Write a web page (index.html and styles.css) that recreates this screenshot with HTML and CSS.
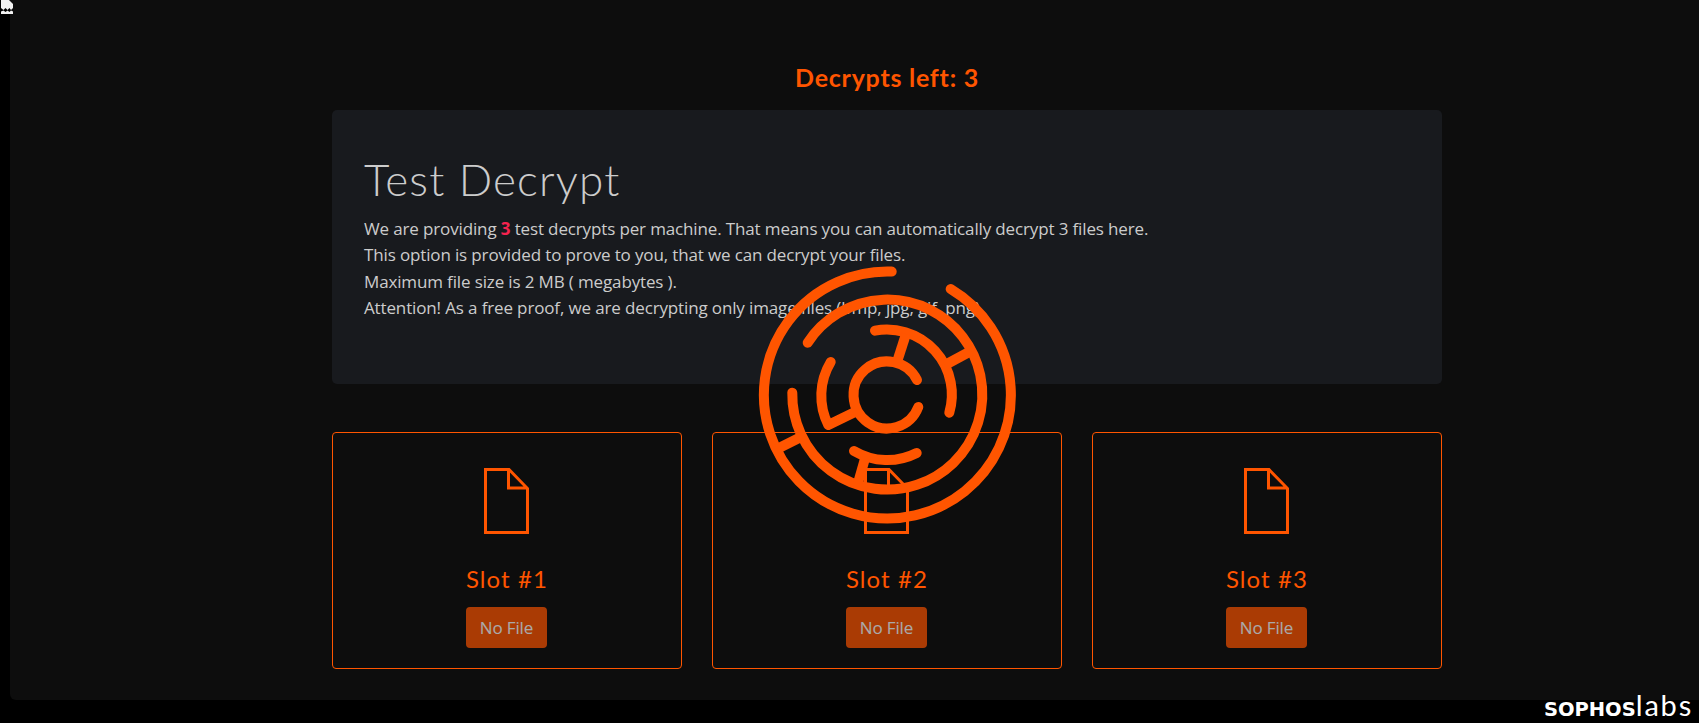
FILE: index.html
```html
<!DOCTYPE html>
<html lang="en">
<head>
<meta charset="utf-8">
<title>Test Decrypt</title>
<link rel="stylesheet" href="styles.css">
</head>
<body>
<svg class="broken-icon" viewBox="0 0 13 14" aria-hidden="true"><path class="broken-fill" d="M1 0H9L13 4V8L11 10L9.5 8L7.5 10L5.5 8L3.5 10L1 8ZM1 14V11.5L3.5 10.5L5.5 12L7.5 10.5L9.5 12L11 10.5L13 11.5V14Z"/></svg>
<main class="app">
  <div class="content">
    <h3 class="left-count">Decrypts left: 3</h3>
    <section class="jumbotron">
      <h1 class="title">Test Decrypt</h1>
      <p class="intro">We are providing <strong class="hl">3</strong> test decrypts per machine. That means you can automatically decrypt 3 files here.<br>This option is provided to prove to you, that we can decrypt your files.<br>Maximum file size is 2 MB ( megabytes ).<br>Attention! As a free proof, we are decrypting only image files (bmp, jpg, gif, png).</p>
    </section>
    <section class="slots">
      <article class="slot">
        <svg class="file" viewBox="0 0 45 66" aria-hidden="true"><path d="M1.5 1.5H25L43.5 20.5V64.5H1.5ZM24.5 1.5V20H43.5"/></svg>
        <h4 class="slot-title">Slot #1</h4>
        <button class="btn" disabled>No File</button>
      </article>
      <article class="slot">
        <svg class="file" viewBox="0 0 45 66" aria-hidden="true"><path d="M1.5 1.5H25L43.5 20.5V64.5H1.5ZM24.5 1.5V20H43.5"/></svg>
        <h4 class="slot-title">Slot #2</h4>
        <button class="btn" disabled>No File</button>
      </article>
      <article class="slot">
        <svg class="file" viewBox="0 0 45 66" aria-hidden="true"><path d="M1.5 1.5H25L43.5 20.5V64.5H1.5ZM24.5 1.5V20H43.5"/></svg>
        <h4 class="slot-title">Slot #3</h4>
        <button class="btn" disabled>No File</button>
      </article>
    </section>
  </div>
</main>
<svg class="maze" viewBox="0 0 300 300" aria-hidden="true">
  <g class="maze-round">
    <path d="M151.7 21.6A123.5 123.5 0 1 0 210.7 39"/>
    <path d="M67.7 92.7A95 95 0 1 1 52.3 142.7"/>
    <path d="M135 80.7A65 65 0 0 1 209.3 162.7"/>
    <path d="M90.7 112A65 65 0 0 0 88.3 175L115 162"/>
    <path d="M114 201A65 65 0 0 0 176.7 203"/>
    <path d="M177 130A33.5 33.5 0 1 0 178.3 157"/>
  </g>
  <g class="maze-spoke">
    <path d="M166 84L157 112"/>
    <path d="M205 115L231 101"/>
    <path d="M37 199L61 187"/>
    <path d="M126 205L118 233"/>
  </g>
</svg>
<div class="logo"><span class="logo-a">SOPHOS</span><span class="logo-b">labs</span></div>
</body>
</html>
```
FILE: styles.css
```css
* { box-sizing: border-box; }
html, body { margin: 0; height: 100%; }
body {
  position: relative;
  width: 1699px;
  height: 723px;
  overflow: hidden;
  background: #000;
  color: #ccc;
  font-family: "Open Sans", "Noto Sans", sans-serif;
}
.app {
  margin-left: 10px;
  height: 700px;
  background: #0d0d0d;
  border-bottom-left-radius: 6px;
  padding: 61px 257px 0 322px;
}
.left-count {
  margin: 0;
  height: 49px;
  text-align: center;
  color: #ff5500;
  font: 700 25px/32px Lato, sans-serif;
  letter-spacing: 0.75px;
}
.jumbotron {
  background: #181a1e;
  border-radius: 5px;
  height: 274px;
  padding: 43px 32px 0;
  margin-bottom: 48px;
}
.title {
  margin: 0 0 10px;
  font: 300 44px/53px Lato, sans-serif;
  letter-spacing: 1.2px;
  color: #ccc;
}
.intro {
  margin: 0;
  font-size: 17px;
  line-height: 26.4px;
  letter-spacing: -0.14px;
}
.hl { color: #f5234f; }
.slots {
  display: grid;
  grid-template-columns: repeat(3, 350px);
  gap: 30px;
}
.slot {
  height: 237px;
  border: 1px solid #ff5500;
  border-radius: 4px;
  padding: 35px 1px 0 0;
  display: flex;
  flex-direction: column;
  align-items: center;
}
.file { width: 45px; height: 66px; display: block; }
.file path { fill: none; stroke: #ff5500; stroke-width: 3; }
.slot-title {
  margin: 30px 0 14px 1px;
  font: 400 24px/29px Lato, sans-serif;
  letter-spacing: 1.1px;
  color: #ff5500;
}
.btn {
  width: 81px;
  height: 41px;
  border: 0;
  border-radius: 4px;
  background: #ff5500;
  color: #fff;
  opacity: .65;
  font-family: "Open Sans", "Noto Sans", sans-serif;
  font-size: 17px;
  letter-spacing: -0.14px;
  padding: 0;
}
.maze {
  position: absolute;
  left: 740px;
  top: 250px;
  width: 300px;
  height: 300px;
}
.maze path { fill: none; stroke: #ff5500; stroke-width: 10; }
.maze-round path { stroke-linecap: round; stroke-linejoin: round; }
.broken-icon { position: absolute; left: 0; top: 0; width: 13px; height: 14px; }
.broken-fill { fill: #f2f2f2; }
.logo {
  position: absolute;
  right: 6px;
  bottom: 1px;
  display: flex;
  align-items: baseline;
  color: #fff;
  line-height: 24px;
}
.logo-a { font: 700 19.5px/24px "DejaVu Sans", sans-serif; }
.logo-b { font: 400 29px/24px Lato, sans-serif; letter-spacing: 1.8px; }
```
